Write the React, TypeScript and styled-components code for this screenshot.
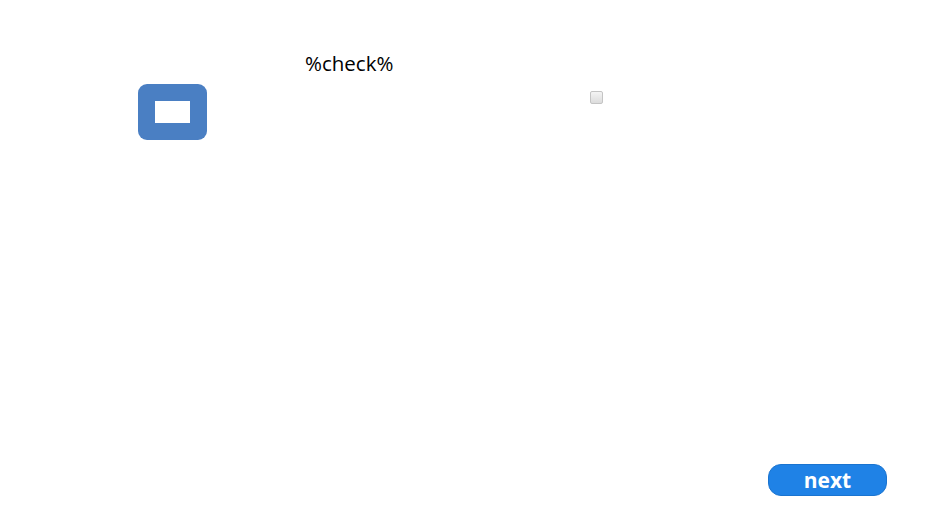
import React, { useState } from "react";
import styled, { createGlobalStyle } from "styled-components";

const App: React.FC = () => {
  const [checked, setChecked] = useState(false);

  return (
    <>
      <GlobalStyle />
      <Page>
        <TopRow>
          <IconButton aria-label="window">
            <Inner />
          </IconButton>
          <CheckLabel>%check%</CheckLabel>
          <Checkbox
            type="checkbox"
            checked={checked}
            onChange={(e) => setChecked(e.target.checked)}
          />
        </TopRow>
        <Footer>
          <NextButton>next</NextButton>
        </Footer>
      </Page>
    </>
  );
};

export default App;

const GlobalStyle = createGlobalStyle`
  html, body {
    margin: 0;
    padding: 0;
    background: #ffffff;
    font-family: "Open Sans", "Liberation Sans", sans-serif;
  }
`;

// 전체 페이지
const Page = styled.div`
  width: 940px;
  height: 528px;
  display: flex;
  flex-direction: column;
  justify-content: space-between;
  box-sizing: border-box;
  padding: 52px 53px 32px 138px;
`;

const TopRow = styled.div`
  display: flex;
  align-items: flex-start;
`;

// 파란 아이콘 버튼
const IconButton = styled.div`
  width: 69px;
  height: 56px;
  margin-top: 32px;
  background-color: #4a7fc3;
  border-radius: 9px;
  display: flex;
  align-items: center;
  justify-content: center;
`;

const Inner = styled.div`
  width: 35px;
  height: 22px;
  background: #ffffff;
`;

const CheckLabel = styled.span`
  margin-left: 98px;
  font-size: 20.5px;
  line-height: 22px;
  color: #000;
`;

const Checkbox = styled.input`
  appearance: none;
  margin: 39px 0 0 197px;
  width: 13px;
  height: 13px;
  border: 1px solid #c4c4c4;
  border-radius: 2px;
  background: linear-gradient(#f4f4f4, #dcdcdc);
  box-sizing: border-box;
`;

const Footer = styled.div`
  display: flex;
  justify-content: flex-end;
`;

const NextButton = styled.button`
  width: 119px;
  height: 32px;
  border: 1px solid #1a74d0;
  border-radius: 13px;
  background-color: #1f82e6;
  color: #ffffff;
  font-family: "Open Sans", "Liberation Sans", sans-serif;
  font-weight: 700;
  font-size: 21px;
  line-height: 30px;
  padding: 0;
  cursor: pointer;
`;
